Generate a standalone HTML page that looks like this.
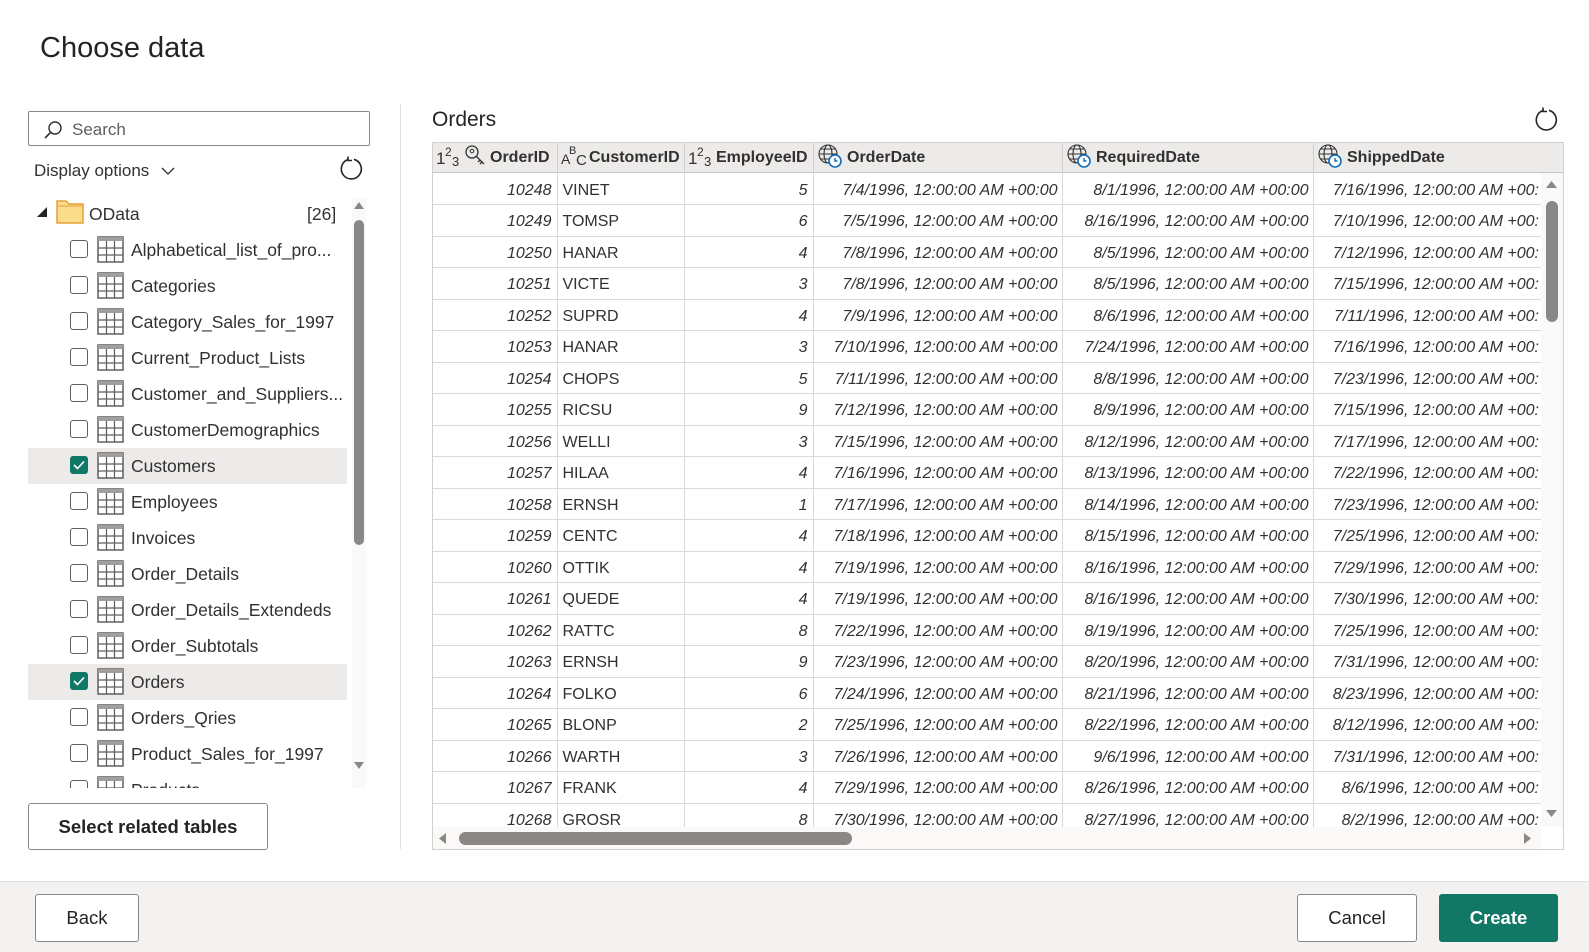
<!DOCTYPE html>
<html><head><meta charset="utf-8"><style>
*{box-sizing:border-box;margin:0;padding:0}
body{width:1589px;height:952px;overflow:hidden;background:#fff;font-family:"Liberation Sans",sans-serif;color:#252423;position:relative}
.abs{position:absolute}
.title{left:40px;top:32px;font-size:29px;color:#252423}
.search{left:28px;top:111px;width:342px;height:35px;border:1px solid #8a8886;border-radius:2px}
.search span{position:absolute;left:43px;top:8px;font-size:17px;color:#605e5c}
.disp{left:34px;top:161px;font-size:17px;color:#323130}
.tree{left:28px;top:196px;width:320px;height:592px;overflow:hidden}
.row{position:absolute;left:0;width:319px;height:36px;font-size:17.5px;color:#323130}
.row.sel{background:#edebe9}
.cb{position:absolute;left:42px;top:8px;width:18px;height:18px;border:1px solid #605e5c;border-radius:3px;background:#fff}
.cb.on{background:#117865;border-color:#117865}
.ti{position:absolute;left:69px;top:4px}
.row .t{position:absolute;left:103px;top:8px;white-space:nowrap}
.lscroll{left:352px;top:198px;width:14px;height:590px;background:#faf9f8}
.btn{border:1px solid #8a8886;border-radius:3px;background:#fff;font-size:18.5px;font-weight:bold;color:#252423;text-align:center}
table{border-collapse:collapse;table-layout:fixed;font-size:16px}
td{height:31.5px;border-right:1px solid #d9d9d9;border-bottom:1px solid #d9d9d9;padding:4px 5px 0;white-space:nowrap;overflow:hidden;color:#323130}
td.n{text-align:right;font-style:italic}
td.d{text-align:right;font-style:italic;padding-right:4px}
.hdr{left:432px;top:142px;width:1132px;height:31px;background:#edebe9;border:1px solid #d2d0ce;border-bottom:1px solid #c8c6c4}
.hc{position:absolute;top:0;height:30px;border-right:1px solid #d2d0ce;font-size:16px;font-weight:bold;color:#323130;line-height:30px;white-space:nowrap;overflow:hidden}
.hc svg{vertical-align:middle;margin:-3px 4px 0 3px}
.ty{position:relative;display:inline-block;height:30px;vertical-align:top;font-weight:normal}
.ty i{position:absolute;font-style:normal}
</style></head><body>
<div class="abs title">Choose data</div>
<div class="abs search"><svg class="abs" style="left:14px;top:8px" width="20" height="20" viewBox="0 0 20 20"><circle cx="12" cy="8" r="6" fill="none" stroke="#323130" stroke-width="1.4"/><path d="M8 12 L2 18" stroke="#323130" stroke-width="1.6"/></svg><span>Search</span></div>
<div class="abs disp">Display options <svg width="16" height="10" style="margin-left:6px" viewBox="0 0 16 10"><path d="M2 2 L8 8 L14 2" fill="none" stroke="#323130" stroke-width="1.3"/></svg></div>
<svg class="abs" style="left:339px;top:156px" width="26" height="26" viewBox="0 0 26 26"><path d="M9 3.5 A10 10 0 1 0 15 3.3" fill="none" stroke="#252423" stroke-width="1.6"/><path d="M9 0.5 L9 4.5 L13 4.5" fill="none" stroke="#252423" stroke-width="1.6"/></svg>
<div class="abs tree">
 <div class="row" style="top:0"><svg class="abs" style="left:8px;top:10px" width="12" height="12"><path d="M11 1 L11 11 L1 11 Z" fill="#252423"/></svg>
 <svg class="abs" style="left:28px;top:2px" width="28" height="26" viewBox="0 0 28 26"><path d="M1 3 H10 L13 6 H27 V25 H1 Z" fill="#f9dc8c" stroke="#e8a03a" stroke-width="1.5"/><path d="M1 8 H27" stroke="#e8a03a" stroke-width="1"/></svg>
 <span class="t" style="left:61px">OData</span><span class="t" style="left:279px">[26]</span></div>
</div>
<div class="abs lscroll"><svg class="abs" style="left:1px;top:2px" width="12" height="10"><path d="M1 9 L6 2 L11 9Z" fill="#8a8886"/></svg><div class="abs" style="left:2px;top:22px;width:10px;height:325px;background:#8a8886;border-radius:5px"></div><svg class="abs" style="left:1px;top:563px" width="12" height="10"><path d="M1 1 L6 8 L11 1Z" fill="#8a8886"/></svg></div>
<div class="abs btn" style="left:28px;top:803px;width:240px;height:47px;line-height:45px">Select related tables</div>
<div class="abs" style="left:400px;top:104px;width:1px;height:745px;background:#e1dfdd"></div>
<div class="abs" style="left:432px;top:108px;font-size:21px;color:#252423">Orders</div>
<svg class="abs" style="left:1534px;top:107px" width="26" height="26" viewBox="0 0 26 26"><path d="M9 3.5 A10 10 0 1 0 15 3.3" fill="none" stroke="#252423" stroke-width="1.6"/><path d="M9 0.5 L9 4.5 L13 4.5" fill="none" stroke="#252423" stroke-width="1.6"/></svg>
<div class="abs" style="left:432px;top:142px;width:1132px;height:708px;border:1px solid #d2d0ce"></div>
<div class="abs hdr">
 <div class="hc" style="left:0;width:125px"><span class="ty" style="width:28px;margin-left:3px"><i style="left:0;top:7px;font-size:17px;line-height:17px">1</i><i style="left:9px;top:3px;font-size:12px;line-height:12px">2</i><i style="left:16px;top:12px;font-size:13px;line-height:13px">3</i></span><svg width="24" height="24" viewBox="0 0 24 24" style="margin:-3px 2px 0 0"><circle cx="8" cy="8" r="6" fill="none" stroke="#323130" stroke-width="1.3"/><circle cx="8" cy="7" r="1.8" fill="none" stroke="#323130"/><path d="M12 12 L20 20 M16 16 L14 18 M18 18 L16 20" stroke="#323130" stroke-width="1.3"/></svg>OrderID</div>
 <div class="hc" style="left:125px;width:127px"><span class="ty" style="width:28px;margin-left:3px"><i style="left:0;top:9px;font-size:14px;line-height:14px">A</i><i style="left:8px;top:3px;font-size:11px;line-height:11px">B</i><i style="left:15px;top:10px;font-size:15px;line-height:15px">C</i></span>CustomerID</div>
 <div class="hc" style="left:252px;width:129px"><span class="ty" style="width:28px;margin-left:3px"><i style="left:0;top:7px;font-size:17px;line-height:17px">1</i><i style="left:9px;top:3px;font-size:12px;line-height:12px">2</i><i style="left:16px;top:12px;font-size:13px;line-height:13px">3</i></span>EmployeeID</div>
 <div class="hc" style="left:381px;width:249px"><svg width="26" height="26" viewBox="0 0 26 26"><g fill="none" stroke="#323130" stroke-width="1.1"><circle cx="11" cy="11" r="9"/><ellipse cx="11" cy="11" rx="4" ry="9"/><path d="M2 11H20M4 6H18M4 16H14"/></g><circle cx="18" cy="18" r="6" fill="#fff" stroke="#0f6cbd" stroke-width="1.6"/><path d="M18 15V18H20.5" fill="none" stroke="#0f6cbd" stroke-width="1.4"/></svg>OrderDate</div>
 <div class="hc" style="left:630px;width:251px"><svg width="26" height="26" viewBox="0 0 26 26"><g fill="none" stroke="#323130" stroke-width="1.1"><circle cx="11" cy="11" r="9"/><ellipse cx="11" cy="11" rx="4" ry="9"/><path d="M2 11H20M4 6H18M4 16H14"/></g><circle cx="18" cy="18" r="6" fill="#fff" stroke="#0f6cbd" stroke-width="1.6"/><path d="M18 15V18H20.5" fill="none" stroke="#0f6cbd" stroke-width="1.4"/></svg>RequiredDate</div>
 <div class="hc" style="left:881px;width:250px;border:none"><svg width="26" height="26" viewBox="0 0 26 26"><g fill="none" stroke="#323130" stroke-width="1.1"><circle cx="11" cy="11" r="9"/><ellipse cx="11" cy="11" rx="4" ry="9"/><path d="M2 11H20M4 6H18M4 16H14"/></g><circle cx="18" cy="18" r="6" fill="#fff" stroke="#0f6cbd" stroke-width="1.6"/><path d="M18 15V18H20.5" fill="none" stroke="#0f6cbd" stroke-width="1.4"/></svg>ShippedDate</div>
</div>
<div class="abs" style="left:433px;top:173px;width:1108px;height:654px;overflow:hidden">
<table id="tb" style="width:1110px"><colgroup><col style="width:124px"><col style="width:127px"><col style="width:129px"><col style="width:249px"><col style="width:251px"><col style="width:230px"></colgroup><tbody id="tbd"></tbody></table>
</div>
<div class="abs" style="left:1541px;top:173px;width:22px;height:654px;background:#faf9f8"><svg class="abs" style="left:4px;top:6px" width="13" height="10"><path d="M1 9 L6.5 2 L12 9Z" fill="#8a8886"/></svg><div class="abs" style="left:5px;top:28px;width:12px;height:121px;background:#8a8886;border-radius:6px"></div><svg class="abs" style="left:4px;top:636px" width="13" height="10"><path d="M1 1 L6.5 8 L12 1Z" fill="#8a8886"/></svg></div>
<div class="abs" style="left:433px;top:827px;width:1108px;height:22px;background:#faf9f8"><svg class="abs" style="left:4px;top:5px" width="10" height="13"><path d="M9 1 L2 6.5 L9 12Z" fill="#8a8886"/></svg><div class="abs" style="left:26px;top:5px;width:393px;height:13px;background:#8a8886;border-radius:7px"></div><svg class="abs" style="left:1090px;top:5px" width="10" height="13"><path d="M1 1 L8 6.5 L1 12Z" fill="#8a8886"/></svg></div>
<div class="abs" style="left:0;top:881px;width:1589px;height:71px;background:#f3f2f1;border-top:1px solid #e1dfdd"></div>
<div class="abs btn" style="left:35px;top:894px;width:104px;height:48px;line-height:46px;font-weight:normal">Back</div>
<div class="abs btn" style="left:1297px;top:894px;width:120px;height:48px;line-height:46px;font-weight:normal">Cancel</div>
<div class="abs btn" style="left:1439px;top:894px;width:119px;height:48px;line-height:46px;background:#117865;border-color:#117865;color:#fff">Create</div>
<script>
var items=["Alphabetical_list_of_pro...","Categories","Category_Sales_for_1997","Current_Product_Lists","Customer_and_Suppliers...","CustomerDemographics","Customers","Employees","Invoices","Order_Details","Order_Details_Extendeds","Order_Subtotals","Orders","Orders_Qries","Product_Sales_for_1997","Products"];
var tree=document.querySelector('.tree'),h='';
var ti='<svg class="ti" width="27" height="27" viewBox="0 0 27 27"><rect x="1" y="1" width="25" height="25" fill="#fff" stroke="#605e5c" stroke-width="1.5"/><rect x="1" y="1" width="25" height="4" fill="#a19f9d"/><path d="M1 12H26M1 19H26M9.5 5V26M17.5 5V26" stroke="#605e5c" stroke-width="1.2"/></svg>';
items.forEach(function(t,i){var on=(t=="Customers"||t=="Orders");h+='<div class="row'+(on?' sel':'')+'" style="top:'+(36+i*36)+'px"><div class="cb'+(on?' on':'')+'">'+(on?'<svg width="16" height="16" viewBox="0 0 16 16"><path d="M3 8 L6.5 11.5 L13 4.5" fill="none" stroke="#fff" stroke-width="1.6"/></svg>':'')+'</div>'+ti+'<span class="t">'+t+'</span></div>'});
tree.innerHTML+=h;
var c=["VINET","TOMSP","HANAR","VICTE","SUPRD","HANAR","CHOPS","RICSU","WELLI","HILAA","ERNSH","CENTC","OTTIK","QUEDE","RATTC","ERNSH","FOLKO","BLONP","WARTH","FRANK","GROSR"];
var e=[5,6,4,3,4,3,5,9,3,4,1,4,4,4,8,9,6,2,3,4,8];
var o=["7/4","7/5","7/8","7/8","7/9","7/10","7/11","7/12","7/15","7/16","7/17","7/18","7/19","7/19","7/22","7/23","7/24","7/25","7/26","7/29","7/30"];
var r=["8/1","8/16","8/5","8/5","8/6","7/24","8/8","8/9","8/12","8/13","8/14","8/15","8/16","8/16","8/19","8/20","8/21","8/22","9/6","8/26","8/27"];
var s=["7/16","7/10","7/12","7/15","7/11","7/16","7/23","7/15","7/17","7/22","7/23","7/25","7/29","7/30","7/25","7/31","8/23","8/12","7/31","8/6","8/2"];
var b='';for(var i=0;i<21;i++){b+='<tr><td class="n">'+(10248+i)+'</td><td>'+c[i]+'</td><td class="n">'+e[i]+'</td><td class="d">'+o[i]+'/1996, 12:00:00 AM +00:00</td><td class="d">'+r[i]+'/1996, 12:00:00 AM +00:00</td><td class="d" style="text-align:right;border-right:none;text-overflow:clip">'+s[i]+'/1996, 12:00:00 AM +00:</td></tr>'}
document.getElementById('tbd').innerHTML=b;
</script>
</body></html>
